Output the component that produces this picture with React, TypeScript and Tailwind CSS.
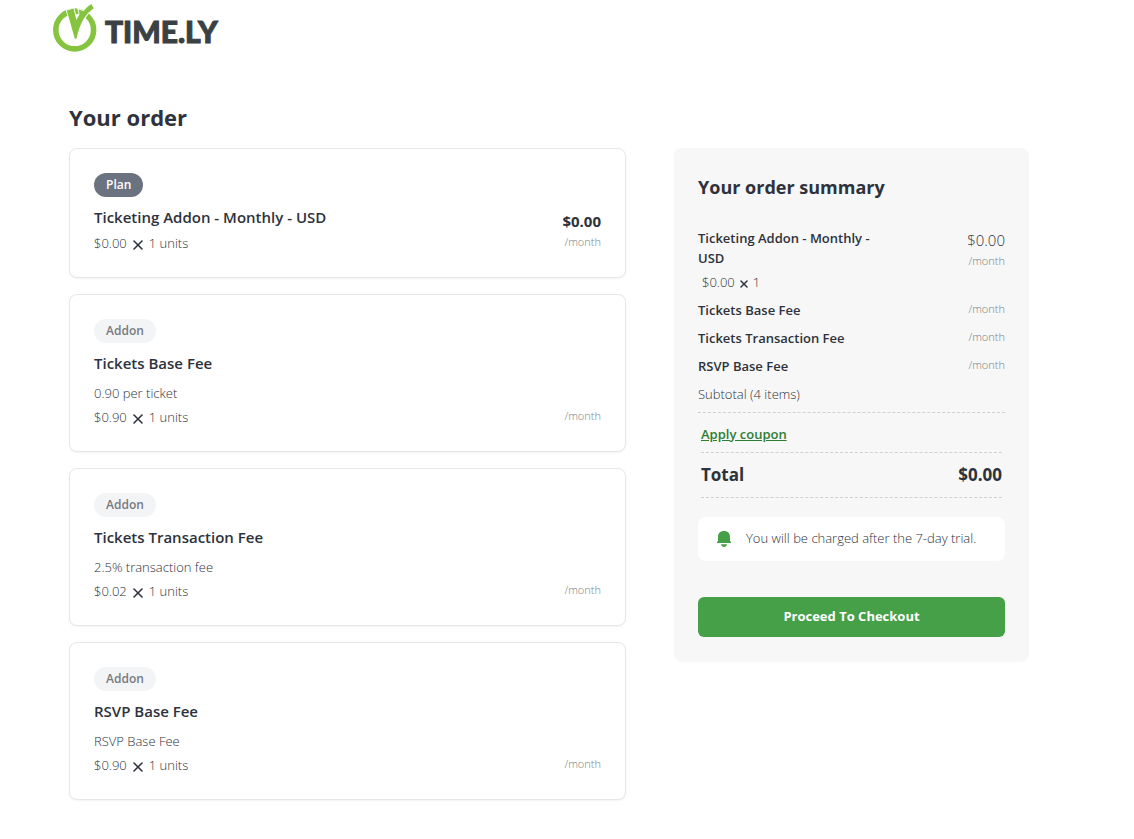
import { X } from 'lucide-react';

type OrderItem = {
  name: string;
  badge: 'Plan' | 'Addon';
  description?: string;
  unitPrice: string;
  total?: string;
};

const items: OrderItem[] = [
  { name: 'Ticketing Addon - Monthly - USD', badge: 'Plan', unitPrice: '$0.00', total: '$0.00' },
  { name: 'Tickets Base Fee', badge: 'Addon', description: '0.90 per ticket', unitPrice: '$0.90' },
  { name: 'Tickets Transaction Fee', badge: 'Addon', description: '2.5% transaction fee', unitPrice: '$0.02' },
  { name: 'RSVP Base Fee', badge: 'Addon', description: 'RSVP Base Fee', unitPrice: '$0.90' },
];

function Logo() {
  return (
    <a href="/" className="flex items-center gap-2" aria-label="Time.ly">
      <svg viewBox="0 0 44 54" className="h-[54px] w-11" aria-hidden="true">
        <circle cx="21.7" cy="30" r="18.9" fill="none" stroke="#86c440" strokeWidth="5.6" />
        <path
          d="M13.8 10.6 L20.6 8.6 L23.4 20 C24.6 17.5 25.6 15.8 26.6 14.2 L25.4 9.4 L30.6 11 C33 8 35.500 5.800 38.300 4 L40.800 8.300 C32 14.500 27.500 22 23.400 38.800 H21.800 Z"
          fill="#86c440"
          stroke="#fff"
          strokeWidth="1.8"
          style={{ paintOrder: 'stroke' }}
        />
      </svg>
      <span className="pt-2 font-['Lato',sans-serif] text-3xl leading-10 font-black text-[#3a4144] [-webkit-text-stroke:1px_#3a4144]">
        TIME.LY
      </span>
    </a>
  );
}

function OrderCard({ item }: { item: OrderItem }) {
  return (
    <article className="flex items-end justify-between rounded-lg border border-[#e6e7e9] bg-white p-6 shadow-xs">
      <div>
        <span
          className={
            item.badge === 'Plan'
              ? 'inline-flex h-6 items-center rounded-full bg-[#6b7280] px-3 align-top text-xs font-semibold text-white'
              : 'inline-flex h-6 items-center rounded-full bg-[#f3f4f6] px-3 align-top text-xs font-semibold text-[#777a7f]'
          }
        >
          {item.badge}
        </span>
        <h3 className="mt-2 text-[15px] leading-6 font-semibold">{item.name}</h3>
        {item.description && <p className="mt-2 text-[13px] leading-5 font-light">{item.description}</p>}
        <p className="mt-1 flex items-center text-[13px] leading-5 font-light">
          {item.unitPrice}
          <X className="mx-[3px] mt-1 size-4" strokeWidth={2.4} />
          1 units
        </p>
      </div>
      <div className="pb-0.5 text-right">
        {item.total && <p className="text-[15px] leading-6 font-bold">{item.total}</p>}
        <p className="text-[11px] leading-[18px] font-light text-[#7b7e84]">/month</p>
      </div>
    </article>
  );
}

function OrderSummary() {
  return (
    <aside className="rounded-lg bg-[#f7f7f7] px-6 py-[25px]">
      <h2 className="text-lg leading-7 font-bold">Your order summary</h2>

      <ul className="mt-[27px] space-y-2">
        {items.map((item) => (
          <li key={item.name} className="flex justify-between">
            <div className="w-[200px]">
              <p className="text-[13px] leading-5 font-semibold">{item.name}</p>
              {item.total && (
                <p className="mt-1 flex items-center pl-1 text-[13px] leading-5 font-light">
                  {item.unitPrice}
                  <X className="mx-[3px] mt-1 size-3" strokeWidth={3} />1
                </p>
              )}
            </div>
            <div className="text-right font-light">
              {item.total && <p className="text-[15px] leading-6">{item.total}</p>}
              <p className="text-[11px] leading-[18px] text-[#7b7e84]">/month</p>
            </div>
          </li>
        ))}
      </ul>

      <p className="mt-2 border-b border-dashed border-[#cfd1d6] pb-2 text-[13px] leading-5 font-light">
        Subtotal (4 items)
      </p>
      <div className="px-[3px]">
        <div className="flex h-10 items-center border-b border-dashed border-[#cfd1d6] pt-1">
          <a href="#coupon" className="text-[13px] font-semibold text-[#2e7d32] underline">
            Apply coupon
          </a>
        </div>
        <div className="flex h-[45px] items-center justify-between border-b border-dashed border-[#cfd1d6] text-[17px] font-bold">
          <span>Total</span>
          <span>{items[0].total}</span>
        </div>
      </div>

      <div className="mt-[19px] flex h-11 items-center rounded-lg bg-white pl-[18px]">
        <svg viewBox="0 0 16 18" className="h-[18px] w-4 shrink-0 fill-[#45a047]" aria-hidden="true">
          <path d="M2 7 C2 3 4.5 1 8 1 C11.5 1 14 3 14 7 V11 L15 12 V13 H1 V12 L2 11 Z" />
          <path d="M5 14.2 H11 C10.6 16 9.5 17 8 17 C6.5 17 5.4 16 5 14.2 Z" />
        </svg>
        <p className="ml-3.5 text-[13px] font-light">You will be charged after the 7-day trial.</p>
      </div>

      <button type="button" className="mt-9 h-10 w-full rounded-md bg-[#45a047] text-[13px] font-bold text-white">
        Proceed To Checkout
      </button>
    </aside>
  );
}

export default function App() {
  return (
    <div className="min-h-screen bg-white pb-10 font-['Open_Sans','Noto_Sans',sans-serif] text-[#2d323c]">
      <header className="flex pl-[53px]">
        <Logo />
      </header>
      <main className="pt-[47px] pr-[105px] pl-[69px]">
        <h1 className="text-[22px] leading-8 font-bold">Your order</h1>
        <div className="mt-[15px] grid grid-cols-[557fr_355fr] items-start gap-12">
          <section className="space-y-4">
            {items.map((item) => (
              <OrderCard key={item.name} item={item} />
            ))}
          </section>
          <OrderSummary />
        </div>
      </main>
    </div>
  );
}
